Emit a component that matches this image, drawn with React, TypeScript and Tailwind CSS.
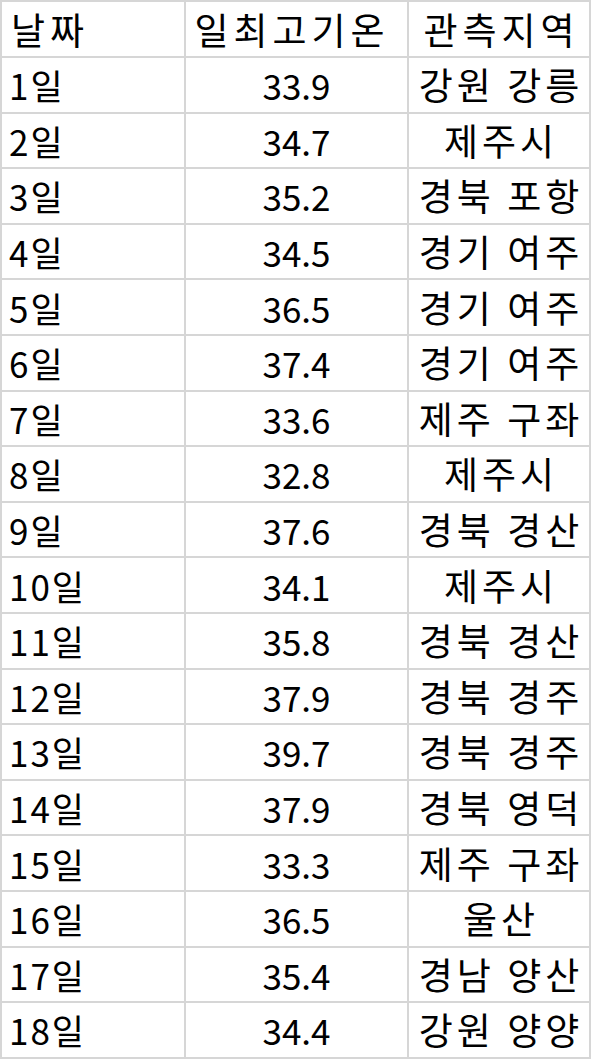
import React from "react";

const rows: [string, string, string][] = [
  ["1일", "33.9", "강원 강릉"],
  ["2일", "34.7", "제주시"],
  ["3일", "35.2", "경북 포항"],
  ["4일", "34.5", "경기 여주"],
  ["5일", "36.5", "경기 여주"],
  ["6일", "37.4", "경기 여주"],
  ["7일", "33.6", "제주 구좌"],
  ["8일", "32.8", "제주시"],
  ["9일", "37.6", "경북 경산"],
  ["10일", "34.1", "제주시"],
  ["11일", "35.8", "경북 경산"],
  ["12일", "37.9", "경북 경주"],
  ["13일", "39.7", "경북 경주"],
  ["14일", "37.9", "경북 영덕"],
  ["15일", "33.3", "제주 구좌"],
  ["16일", "36.5", "울산"],
  ["17일", "35.4", "경남 양산"],
  ["18일", "34.4", "강원 양양"],
];

export default function App() {
  return (
    <div
      className="w-[600px] h-[1061px] bg-white text-black"
      style={{ fontFamily: '"Noto Sans CJK KR", "Noto Sans", sans-serif' }}
    >
      <table className="border-collapse w-[589px] table-fixed text-[35px] leading-none">
        <colgroup>
          <col className="w-[184px]" />
          <col className="w-[223px]" />
          <col className="w-[182px]" />
        </colgroup>
        <tbody>
          <tr className="h-[56px]">
            <td className="border-2 border-[#d6d6d6] pl-[9px] text-left text-[37px] tracking-[5px]">날짜</td>
            <td className="border-2 border-[#d6d6d6] pr-[9px] text-center text-[37px] tracking-[5px]">일최고기온</td>
            <td className="border-2 border-[#d6d6d6] pl-[5px] text-center text-[37px] tracking-[5px]">관측지역</td>
          </tr>
          {rows.map((r, i) => (
            <tr key={i} className="h-[55.6px]">
              <td className="border-2 border-[#d6d6d6] pl-[7px] text-left tracking-[2px]">{r[0]}</td>
              <td className="border-2 border-[#d6d6d6] text-center">{r[1]}</td>
              <td className="border-2 border-[#d6d6d6] pl-[4px] text-center text-[37px] tracking-[4px]">{r[2]}</td>
            </tr>
          ))}
        </tbody>
      </table>
    </div>
  );
}
